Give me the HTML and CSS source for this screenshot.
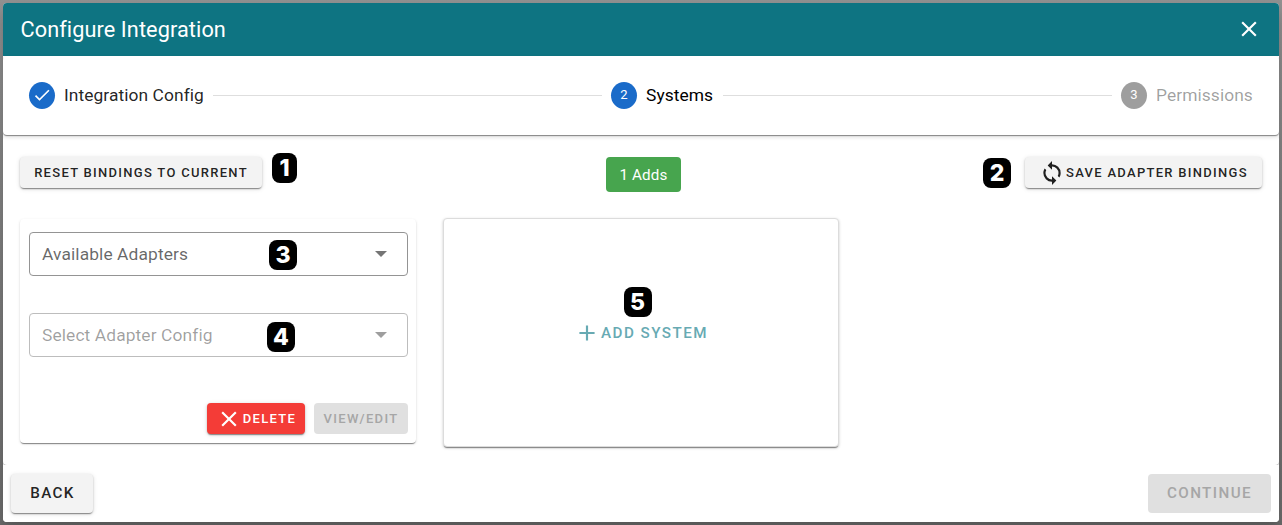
FILE: index.html
```html
<!DOCTYPE html>
<html lang="en">
<head>
<meta charset="utf-8">
<title>Configure Integration</title>
<link rel="stylesheet" href="styles.css">
</head>
<body>
<div class="dialog">
  <header class="titlebar">
    <span class="title">Configure Integration</span>
    <svg class="icon" viewBox="0 0 24 24"><path d="M19,6.41L17.59,5L12,10.59L6.41,5L5,6.41L10.59,12L5,17.59L6.41,19L12,13.41L17.59,19L19,17.59L13.41,12L19,6.41Z"/></svg>
  </header>
  <nav class="stepper">
    <span class="step-dot"><svg class="check" viewBox="0 0 24 24"><path d="M21,7L9,19L3.5,13.5L4.91,12.09L9,16.17L19.59,5.59L21,7Z"/></svg></span>
    <span class="step-label config">Integration Config</span>
    <span class="line"></span>
    <span class="step-dot">2</span>
    <span class="step-label current">Systems</span>
    <span class="line"></span>
    <span class="step-dot off">3</span>
    <span class="step-label muted">Permissions</span>
  </nav>
  <main class="content">
    <div class="toolbar">
      <button class="btn small reset">RESET BINDINGS TO CURRENT</button>
      <span class="chip">1 Adds</span>
      <button class="btn small save"><svg class="icon" viewBox="0 0 24 24"><path d="M12,18A6,6 0 0,1 6,12C6,11 6.25,10.03 6.7,9.2L5.24,7.74C4.46,8.97 4,10.43 4,12A8,8 0 0,0 12,20V23L16,19L12,15M12,4V1L8,5L12,9V6A6,6 0 0,1 18,12C18,13 17.75,13.97 17.3,14.8L18.76,16.26C19.54,15.03 20,13.57 20,12A8,8 0 0,0 12,4Z"/></svg><span>SAVE ADAPTER BINDINGS</span></button>
      <span class="marker one">1</span>
      <span class="marker two">2</span>
    </div>
    <div class="cards">
      <section class="card system">
        <div class="select"><span>Available Adapters</span><i class="caret"></i><span class="marker three">3</span></div>
        <div class="select disabled"><span>Select Adapter Config</span><i class="caret"></i><span class="marker four">4</span></div>
        <div class="actions">
          <button class="btn small delete"><svg class="icon" viewBox="0 0 24 24"><path d="M19,6.41L17.59,5L12,10.59L6.41,5L5,6.41L10.59,12L5,17.59L6.41,19L12,13.41L17.59,19L19,17.59L13.41,12L19,6.41Z"/></svg><span>DELETE</span></button>
          <button class="btn small view" disabled>VIEW/EDIT</button>
        </div>
      </section>
      <section class="card add">
        <button class="add-button"><svg class="icon" viewBox="0 0 24 24"><path d="M19,13H13V19H11V13H5V11H11V5H13V11H19V13Z"/></svg><span>ADD SYSTEM</span></button>
        <span class="marker five">5</span>
      </section>
    </div>
  </main>
  <footer class="footer">
    <button class="btn large back">BACK</button>
    <button class="btn large continue" disabled>CONTINUE</button>
  </footer>
</div>
</body>
</html>
```
FILE: styles.css
```css
* { box-sizing: border-box; }
body {
  margin: 0;
  height: 525px;
  padding: 3px;
  overflow: hidden;
  background: linear-gradient(#909090, #7c7c7c 50%, #6c6c6c);
  font-family: Roboto, sans-serif;
  color: rgba(0, 0, 0, .87);
}
button { font-family: inherit; border: 0; margin: 0; padding: 0; }
.icon { width: 26px; height: 26px; fill: currentColor; flex: none; display: block; }
.dialog {
  width: 1276px;
  height: 519px;
  display: flex;
  flex-direction: column;
  background: #fff;
  border-radius: 4px;
  overflow: hidden;
  box-shadow: 0 10px 14px rgba(0, 0, 0, .2);
}
.titlebar {
  height: 53px;
  flex: none;
  display: flex;
  align-items: center;
  justify-content: space-between;
  padding: 0 17.5px 1px 17.5px;
  background: #0e7482;
  color: #fff;
}
.title { font-size: 21.7px; letter-spacing: .09px; }
.stepper {
  position: relative;
  height: 79px;
  flex: none;
  display: flex;
  align-items: center;
  gap: 9px;
  padding: 0 26px;
  border-radius: 4px;
  box-shadow: 0 1px 1px rgba(0, 0, 0, .42), 0 2px 4px rgba(0, 0, 0, .14);
}
.step-dot {
  width: 26px;
  height: 27px;
  flex: none;
  display: flex;
  align-items: center;
  justify-content: center;
  border-radius: 50%;
  background: #1a6bc9;
  color: #fff;
  font-size: 13px;
  padding-bottom: 2px;
}
.off { background: #9e9e9e; }
.check { width: 20px; height: 20px; fill: #fff; margin-top: 1px; }
.step-label { font-size: 17.4px; letter-spacing: .07px; line-height: 18px; padding-bottom: 2px; white-space: nowrap; flex: none; }
.config { width: 140px; }
.current { width: 68px; color: #000; }
.muted { width: 97px; color: rgba(0, 0, 0, .38); }
.line { flex: 1; height: 1px; background: #dedede; }
.content {
  height: 330px;
  flex: none;
  padding: 22px 17px 0;
  border-radius: 4px;
  box-shadow: 0 1px 1px rgba(0, 0, 0, .3);
}
.toolbar {
  position: relative;
  height: 35px;
  display: grid;
  grid-template-columns: 242px 75px 237px;
  justify-content: space-between;
  align-items: start;
}
.btn {
  display: flex;
  align-items: center;
  justify-content: center;
  border-radius: 4px;
  background: #f3f3f3;
  color: rgba(0, 0, 0, .87);
  font-weight: 500;
  white-space: nowrap;
  box-shadow: 0 2px 1px -1px rgba(0, 0, 0, .3), 0 1px 2px rgba(0, 0, 0, .22), 0 1px 5px rgba(0, 0, 0, .12);
}
.btn:disabled { background: #e0e0e0; color: #a6a6a6; box-shadow: none; }
.small { height: 31px; font-size: 13px; letter-spacing: 1.29px; }
.chip {
  height: 35px;
  border-radius: 4px;
  background: #47a54e;
  color: #fff;
  font-size: 15.2px;
  letter-spacing: .1px;
  display: flex;
  align-items: center;
  justify-content: center;
}
.save .icon { margin-right: 1px; }
.marker {
  position: absolute;
  width: 28px;
  height: 30px;
  border-radius: 8px;
  background: #000;
  color: #fff;
  font: 800 23px/30px Inter, sans-serif;
  letter-spacing: 0;
  text-align: center;
}
.one { left: 252px; top: -4px; width: 25px; }
.two { left: 963px; top: 1px; }
.three { left: 239px; top: 7px; }
.four { left: 237px; top: 8px; }
.five { left: 179.5px; top: 68px; }
.cards {
  display: grid;
  grid-template-columns: 396px 396px;
  gap: 27px;
  align-items: start;
  padding-top: 26px;
}
.card {
  border-radius: 4px;
  background: #fff;
  box-shadow: 0 2px 1px -1px rgba(0, 0, 0, .32), 0 1px 1px rgba(0, 0, 0, .16), 0 1px 3px rgba(0, 0, 0, .12);
}
.system { height: 224px; padding: 13px 8px 9px 9px; margin-top: 1px; }
.select {
  position: relative;
  height: 44px;
  display: flex;
  align-items: center;
  justify-content: space-between;
  padding: 0 20px 0 12px;
  border: 1px solid #949494;
  border-radius: 4px;
  font-size: 17.4px;
  letter-spacing: .1px;
  color: rgba(0, 0, 0, .6);
}
.disabled { margin-top: 37px; border-color: #bdbdbd; color: rgba(0, 0, 0, .38); }
.caret {
  border: 6px solid transparent;
  border-top-color: #757575;
  border-bottom: 0;
}
.disabled .caret { border-top-color: #9e9e9e; }
.actions { display: flex; justify-content: flex-end; gap: 9px; margin-top: 46px; }
.delete { width: 98px; background: #f43c37; color: #fff; }
.delete .icon { margin-right: 1px; }
.view { width: 94px; }
.add {
  position: relative;
  height: 229px;
  border: 1px solid #dcdcdc;
  display: flex;
  align-items: center;
  justify-content: center;
  box-shadow: 0 2px 1px -1px rgba(0, 0, 0, .4), 0 1px 3px rgba(0, 0, 0, .22);
}
.add-button {
  display: flex;
  align-items: center;
  gap: 1px;
  background: none;
  color: #67aab3;
  font-size: 15.2px;
  font-weight: 500;
  letter-spacing: 1.45px;
}
.footer {
  position: relative;
  flex: 1;
  display: flex;
  justify-content: space-between;
  padding: 9px 8px 0;
  background: #fff;
}
.large { height: 39px; font-size: 15.2px; letter-spacing: 1.42px; padding-bottom: 2px; }
.back { width: 82px; padding-left: 1px; }
.continue { width: 123px; }
```
